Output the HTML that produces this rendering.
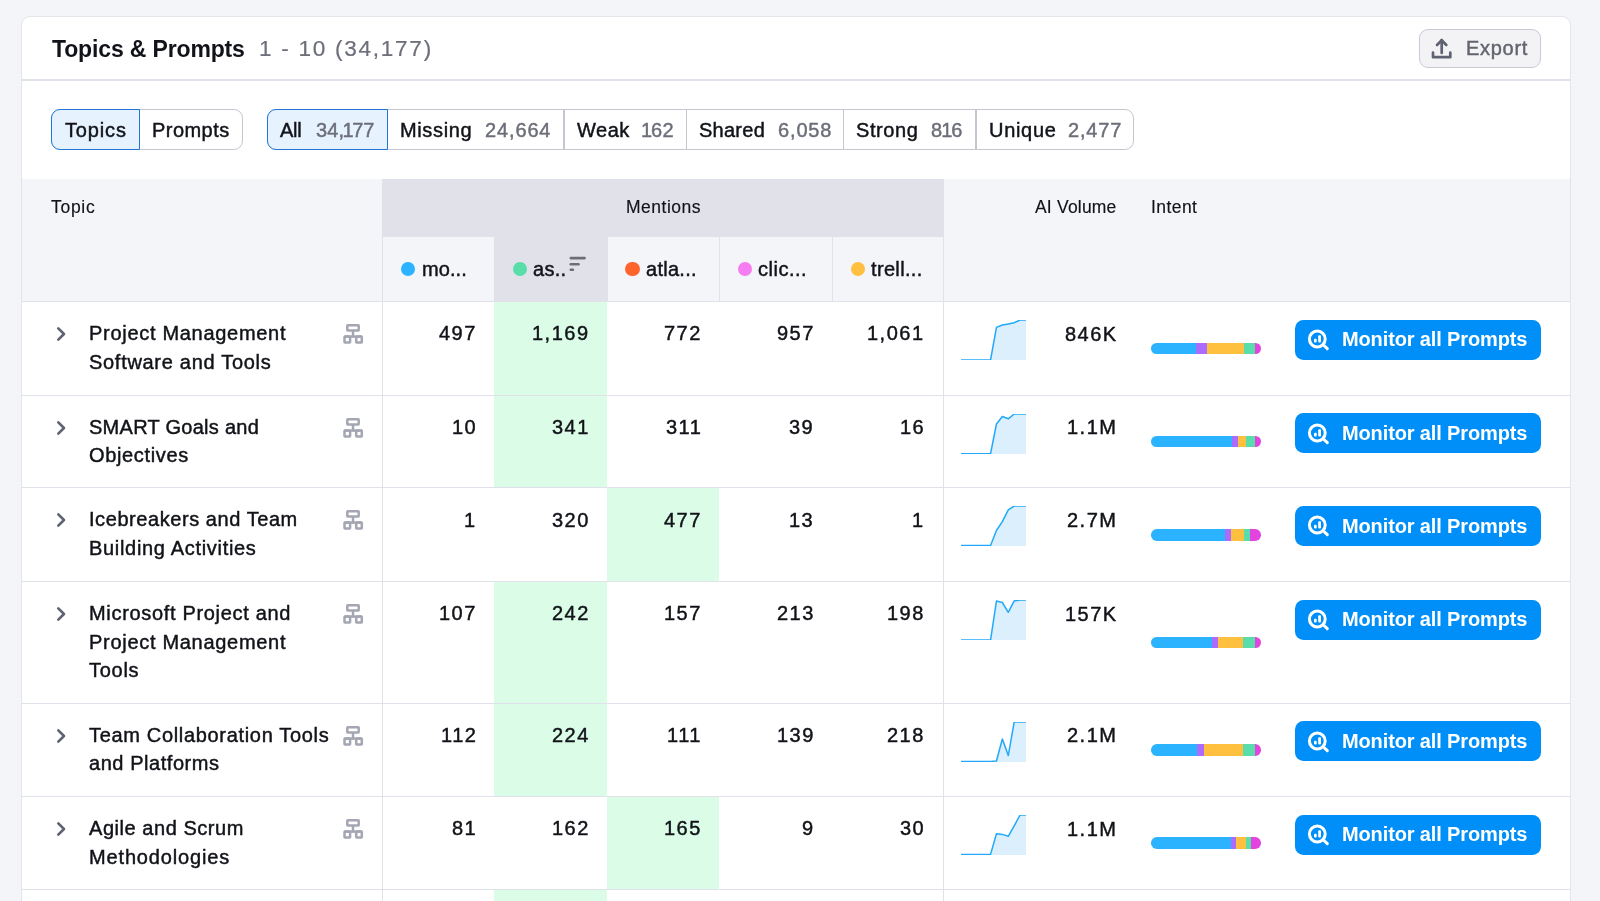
<!DOCTYPE html>
<html><head><meta charset="utf-8"><style>
html,body{margin:0;padding:0;}
body{width:1600px;height:901px;overflow:hidden;background:#f4f5f9;position:relative;font-family:"Liberation Sans", sans-serif;}
.t{position:absolute;line-height:1;white-space:nowrap;will-change:transform;-webkit-text-stroke:0.45px currentColor;}
.r{position:absolute;}
</style></head><body>
<div class="r" style="left:21.40px;top:15.80px;width:1549.40px;height:984.20px;background:#fff;border:1.2px solid #e4e5eb;border-radius:9px;box-sizing:border-box;"></div><div class="t" style="left:51.70px;top:37.53px;font-size:23px;color:#111318;font-weight:700;letter-spacing:-0.147px;-webkit-text-stroke:0;">Topics &amp; Prompts</div><div class="t" style="left:258.90px;top:38.17px;font-size:22.6px;color:#6c6e79;font-weight:400;letter-spacing:1.711px;-webkit-text-stroke:0.2px currentColor;">1 - 10 (34,177)</div><div class="r" style="left:1419.20px;top:29.20px;width:121.60px;height:39.20px;background:#f3f3f5;border:1.4px solid #c9cbd3;border-radius:9px;box-sizing:border-box;"></div><svg class="r" style="left:1427px;top:34px" width="30" height="30" viewBox="0 0 30 30"><g fill="none" stroke="#5f6270" stroke-width="2.7" stroke-linecap="round" stroke-linejoin="round"><path d="M14.7 6.2V19"/><path d="M10 11L14.7 6.2L19.3 11"/><path d="M6 18.7V23.2H23.3V18.7"/></g></svg><div class="t" style="left:1466.40px;top:38.27px;font-size:20px;color:#62646f;font-weight:400;letter-spacing:0.700px;">Export</div><div class="r" style="left:22.40px;top:79.30px;width:1547.40px;height:1.40px;background:#e0e1e9;"></div><div class="r" style="left:51.20px;top:109.10px;width:191.80px;height:41.00px;border:1.6px solid #c4c7cf;border-radius:9px;box-sizing:border-box;"></div><div class="r" style="left:51.20px;top:109.10px;width:89.00px;height:41.00px;background:#e6f2fe;border:1.6px solid #2176d9;border-radius:9px 0 0 9px;box-sizing:border-box;"></div><div class="t" style="left:64.90px;top:119.77px;font-size:20px;color:#111318;font-weight:400;letter-spacing:0.840px;">Topics</div><div class="t" style="left:152.40px;top:119.77px;font-size:20px;color:#111318;font-weight:400;letter-spacing:0.458px;">Prompts</div><div class="r" style="left:266.60px;top:109.10px;width:867.40px;height:41.00px;border:1.6px solid #c4c7cf;border-radius:9px;box-sizing:border-box;"></div><div class="r" style="left:266.60px;top:109.10px;width:121.40px;height:41.00px;background:#e6f2fe;border:1.6px solid #2176d9;border-radius:9px 0 0 9px;box-sizing:border-box;"></div><div class="r" style="left:563.15px;top:109.10px;width:1.50px;height:41.00px;background:#c4c7cf;"></div><div class="r" style="left:685.55px;top:109.10px;width:1.50px;height:41.00px;background:#c4c7cf;"></div><div class="r" style="left:842.85px;top:109.10px;width:1.50px;height:41.00px;background:#c4c7cf;"></div><div class="r" style="left:975.45px;top:109.10px;width:1.50px;height:41.00px;background:#c4c7cf;"></div><div class="t" style="left:280.00px;top:119.67px;font-size:20px;color:#111318;font-weight:400;letter-spacing:-0.325px;">All</div><div class="t" style="left:315.60px;top:119.67px;font-size:20px;color:#6c6e79;"><span style="letter-spacing:0.05px">3</span><span style="letter-spacing:0.05px">4</span><span style="letter-spacing:-1.45px">,</span><span style="letter-spacing:-1.45px">1</span><span style="letter-spacing:0.05px">7</span><span style="letter-spacing:0.05px">7</span></div><div class="t" style="left:400.00px;top:119.67px;font-size:20px;color:#111318;font-weight:400;letter-spacing:0.633px;">Missing</div><div class="t" style="left:485.00px;top:119.67px;font-size:20px;color:#6c6e79;"><span style="letter-spacing:0.85px">2</span><span style="letter-spacing:0.85px">4</span><span style="letter-spacing:0.85px">,</span><span style="letter-spacing:0.85px">6</span><span style="letter-spacing:0.85px">6</span><span style="letter-spacing:0.85px">4</span></div><div class="t" style="left:576.80px;top:119.67px;font-size:20px;color:#111318;font-weight:400;letter-spacing:0.500px;">Weak</div><div class="t" style="left:641.40px;top:119.67px;font-size:20px;color:#6c6e79;"><span style="letter-spacing:-1.18px">1</span><span style="letter-spacing:0.32px">6</span><span style="letter-spacing:0.32px">2</span></div><div class="t" style="left:699.30px;top:119.67px;font-size:20px;color:#111318;font-weight:400;letter-spacing:0.260px;">Shared</div><div class="t" style="left:777.60px;top:119.67px;font-size:20px;color:#6c6e79;"><span style="letter-spacing:0.84px">6</span><span style="letter-spacing:0.84px">,</span><span style="letter-spacing:0.84px">0</span><span style="letter-spacing:0.84px">5</span><span style="letter-spacing:0.84px">8</span></div><div class="t" style="left:856.20px;top:119.67px;font-size:20px;color:#111318;font-weight:400;letter-spacing:0.570px;">Strong</div><div class="t" style="left:931.20px;top:119.67px;font-size:20px;color:#6c6e79;"><span style="letter-spacing:-0.98px">8</span><span style="letter-spacing:-0.98px">1</span><span style="letter-spacing:0.52px">6</span></div><div class="t" style="left:988.50px;top:119.67px;font-size:20px;color:#111318;font-weight:400;letter-spacing:0.700px;">Unique</div><div class="t" style="left:1067.90px;top:119.67px;font-size:20px;color:#6c6e79;"><span style="letter-spacing:0.81px">2</span><span style="letter-spacing:0.81px">,</span><span style="letter-spacing:0.81px">4</span><span style="letter-spacing:0.81px">7</span><span style="letter-spacing:0.81px">7</span></div><div class="r" style="left:22.40px;top:178.80px;width:1547.40px;height:122.70px;background:#f4f5f9;"></div><div class="r" style="left:382.20px;top:178.80px;width:561.40px;height:58.60px;background:#e0e1e9;"></div><div class="r" style="left:494.20px;top:237.40px;width:113.60px;height:64.10px;background:#e0e1e9;"></div><div class="t" style="left:51.40px;top:198.89px;font-size:17.5px;color:#111318;font-weight:400;letter-spacing:0.713px;-webkit-text-stroke:0.15px currentColor;">Topic</div><div class="t" style="left:625.50px;top:199.09px;font-size:17.5px;color:#111318;font-weight:400;letter-spacing:0.500px;-webkit-text-stroke:0.15px currentColor;">Mentions</div><div class="t" style="left:1034.70px;top:198.99px;font-size:17.5px;color:#111318;font-weight:400;letter-spacing:0.194px;-webkit-text-stroke:0.15px currentColor;">AI Volume</div><div class="t" style="left:1151.20px;top:198.99px;font-size:17.5px;color:#111318;font-weight:400;letter-spacing:0.440px;-webkit-text-stroke:0.15px currentColor;">Intent</div><div class="r" style="left:400.70px;top:261.8px;width:14.4px;height:14.4px;border-radius:50%;background:#2bb3ff"></div><div class="t" style="left:421.80px;top:258.97px;font-size:20px;color:#111318;font-weight:400;letter-spacing:0.062px;">mo...</div><div class="r" style="left:512.80px;top:261.8px;width:14.4px;height:14.4px;border-radius:50%;background:#59dda9"></div><div class="t" style="left:533.30px;top:258.97px;font-size:20px;color:#111318;font-weight:400;letter-spacing:0.300px;">as..</div><div class="r" style="left:625.20px;top:261.8px;width:14.4px;height:14.4px;border-radius:50%;background:#ff642d"></div><div class="t" style="left:645.80px;top:258.97px;font-size:20px;color:#111318;font-weight:400;letter-spacing:0.267px;">atla...</div><div class="r" style="left:737.60px;top:261.8px;width:14.4px;height:14.4px;border-radius:50%;background:#f67cf2"></div><div class="t" style="left:758.30px;top:258.97px;font-size:20px;color:#111318;font-weight:400;letter-spacing:0.508px;">clic...</div><div class="r" style="left:850.50px;top:261.8px;width:14.4px;height:14.4px;border-radius:50%;background:#ffbf3f"></div><div class="t" style="left:870.70px;top:258.97px;font-size:20px;color:#111318;font-weight:400;letter-spacing:0.343px;">trell...</div><svg class="r" style="left:566px;top:254px" width="24" height="20" viewBox="0 0 24 20"><g stroke="#6c6e79" stroke-width="2.6" stroke-linecap="round"><path d="M4.8 4.1H18.6"/><path d="M4.8 10.2H12.5"/><path d="M4.8 15.8H6.9"/></g></svg><div class="r" style="left:494.20px;top:237.40px;width:1.20px;height:64.10px;background:#e0e1e9;"></div><div class="r" style="left:606.60px;top:237.40px;width:1.20px;height:64.10px;background:#e0e1e9;"></div><div class="r" style="left:719.00px;top:237.40px;width:1.20px;height:64.10px;background:#e0e1e9;"></div><div class="r" style="left:831.60px;top:237.40px;width:1.20px;height:64.10px;background:#e0e1e9;"></div><div class="r" style="left:381.90px;top:178.80px;width:1.30px;height:821.20px;background:#e0e1e9;"></div><div class="r" style="left:942.90px;top:237.40px;width:1.30px;height:762.60px;background:#e0e1e9;"></div><div class="r" style="left:494.20px;top:889.50px;width:112.40px;height:110.50px;background:#dbfde8;"></div><div class="r" style="left:494.20px;top:301.50px;width:112.40px;height:93.70px;background:#dbfde8;"></div><svg class="r" style="left:50px;top:323.80px" width="20" height="20" viewBox="0 0 20 20"><path d="M8.3 4.3L14 10L8.3 15.7" fill="none" stroke="#5f6270" stroke-width="2.6" stroke-linecap="round" stroke-linejoin="round"/></svg><div class="t" style="left:88.90px;top:322.97px;font-size:20px;color:#111318;font-weight:400;letter-spacing:0.703px;">Project Management</div><div class="t" style="left:88.90px;top:351.57px;font-size:20px;color:#111318;font-weight:400;letter-spacing:0.703px;">Software and Tools</div><svg class="r" style="left:343px;top:324.00px" width="21" height="21" viewBox="0 0 21 21"><g fill="none" stroke="#a4a6b3" stroke-width="2.5" stroke-linejoin="round"><rect x="4.3" y="1.3" width="11.4" height="5.3" rx="0.5"/><rect x="1.5" y="12.6" width="5.6" height="6" rx="0.5"/><rect x="13.2" y="12.6" width="5.6" height="6" rx="0.5"/><path d="M10 6.6V12.6"/><path d="M1.5 12.6H18.8"/></g></svg><div class="t" style="left:439.15px;top:323.27px;font-size:20px;color:#111318;font-weight:400;letter-spacing:1.500px;">497</div><div class="t" style="left:532.35px;top:323.27px;font-size:20px;color:#111318;font-weight:400;letter-spacing:1.500px;">1,169</div><div class="t" style="left:664.25px;top:323.27px;font-size:20px;color:#111318;font-weight:400;letter-spacing:1.500px;">772</div><div class="t" style="left:776.55px;top:323.27px;font-size:20px;color:#111318;font-weight:400;letter-spacing:1.500px;">957</div><div class="t" style="left:867.35px;top:323.27px;font-size:20px;color:#111318;font-weight:400;letter-spacing:1.500px;">1,061</div><svg class="r" style="left:961px;top:320.00px;overflow:hidden" width="65" height="40" viewBox="0 0 65 40"><path d="M0.00 40.00 L5.91 40.00 L11.82 40.00 L17.73 40.00 L23.64 40.00 L29.55 40.00 L35.45 7.40 L41.36 5.00 L47.27 3.90 L53.18 2.80 L59.09 0.00 L65.00 0.00 L65 40 L0 40 Z" fill="#dbeffd"/><path d="M0.00 40.00 L5.91 40.00 L11.82 40.00 L17.73 40.00 L23.64 40.00 L29.55 40.00 L35.45 7.40 L41.36 5.00 L47.27 3.90 L53.18 2.80 L59.09 0.00 L65.00 0.00" fill="none" stroke="#22a9fb" stroke-width="1.5" stroke-linejoin="round"/></svg><div class="t" style="left:1064.80px;top:323.57px;font-size:20px;color:#111318;font-weight:400;letter-spacing:1.500px;">846K</div><div class="r" style="left:1151px;top:342.75px;width:109.5px;height:11.6px;border-radius:5.8px;overflow:hidden;display:flex"><div style="width:44.80px;flex:none;height:100%;background:#2bb3ff"></div><div style="width:11.00px;flex:none;height:100%;background:#ab6cfe"></div><div style="width:37.00px;flex:none;height:100%;background:#ffbf3f"></div><div style="width:10.80px;flex:none;height:100%;background:#59ddaa"></div><div style="flex:1;height:100%;background:#e344e0"></div></div><div class="r" style="left:1295.10px;top:319.60px;width:245.90px;height:40.20px;background:#008ff8;border-radius:8.5px;"></div><svg class="r" style="left:1303px;top:324.80px" width="30" height="30" viewBox="0 0 30 30"><g fill="none" stroke="#fff" stroke-width="3" stroke-linecap="round"><circle cx="14.3" cy="14" r="7.9"/><path d="M21 20.5L24.3 23.7"/></g><rect x="11" y="13.7" width="2.7" height="3.8" rx="1" fill="#fff"/><rect x="15.2" y="10.2" width="2.8" height="7.3" rx="1" fill="#fff"/></svg><div class="t" style="left:1342.00px;top:329.37px;font-size:20px;color:#fff;font-weight:700;letter-spacing:-0.128px;-webkit-text-stroke:0;">Monitor all Prompts</div><div class="r" style="left:494.20px;top:395.20px;width:112.40px;height:92.55px;background:#dbfde8;"></div><svg class="r" style="left:50px;top:417.50px" width="20" height="20" viewBox="0 0 20 20"><path d="M8.3 4.3L14 10L8.3 15.7" fill="none" stroke="#5f6270" stroke-width="2.6" stroke-linecap="round" stroke-linejoin="round"/></svg><div class="t" style="left:88.90px;top:416.67px;font-size:20px;color:#111318;font-weight:400;letter-spacing:0.271px;">SMART Goals and</div><div class="t" style="left:88.90px;top:445.27px;font-size:20px;color:#111318;font-weight:400;letter-spacing:0.650px;">Objectives</div><svg class="r" style="left:343px;top:417.70px" width="21" height="21" viewBox="0 0 21 21"><g fill="none" stroke="#a4a6b3" stroke-width="2.5" stroke-linejoin="round"><rect x="4.3" y="1.3" width="11.4" height="5.3" rx="0.5"/><rect x="1.5" y="12.6" width="5.6" height="6" rx="0.5"/><rect x="13.2" y="12.6" width="5.6" height="6" rx="0.5"/><path d="M10 6.6V12.6"/><path d="M1.5 12.6H18.8"/></g></svg><div class="t" style="left:451.75px;top:416.97px;font-size:20px;color:#111318;font-weight:400;letter-spacing:1.500px;">10</div><div class="t" style="left:552.05px;top:416.97px;font-size:20px;color:#111318;font-weight:400;letter-spacing:1.500px;">341</div><div class="t" style="left:665.70px;top:416.97px;font-size:20px;color:#111318;font-weight:400;letter-spacing:1.500px;">311</div><div class="t" style="left:789.15px;top:416.97px;font-size:20px;color:#111318;font-weight:400;letter-spacing:1.500px;">39</div><div class="t" style="left:899.65px;top:416.97px;font-size:20px;color:#111318;font-weight:400;letter-spacing:1.500px;">16</div><svg class="r" style="left:961px;top:413.70px;overflow:hidden" width="65" height="40" viewBox="0 0 65 40"><path d="M0.00 39.70 L5.91 39.70 L11.82 39.70 L17.73 39.70 L23.64 39.70 L29.55 39.70 L35.45 10.00 L41.36 2.50 L47.27 4.80 L53.18 0.00 L59.09 0.00 L65.00 0.00 L65 40 L0 40 Z" fill="#dbeffd"/><path d="M0.00 39.70 L5.91 39.70 L11.82 39.70 L17.73 39.70 L23.64 39.70 L29.55 39.70 L35.45 10.00 L41.36 2.50 L47.27 4.80 L53.18 0.00 L59.09 0.00 L65.00 0.00" fill="none" stroke="#22a9fb" stroke-width="1.5" stroke-linejoin="round"/></svg><div class="t" style="left:1067.05px;top:417.27px;font-size:20px;color:#111318;font-weight:400;letter-spacing:1.500px;">1.1M</div><div class="r" style="left:1151px;top:435.88px;width:109.5px;height:11.6px;border-radius:5.8px;overflow:hidden;display:flex"><div style="width:81.10px;flex:none;height:100%;background:#2bb3ff"></div><div style="width:5.70px;flex:none;height:100%;background:#ab6cfe"></div><div style="width:7.90px;flex:none;height:100%;background:#ffbf3f"></div><div style="width:9.00px;flex:none;height:100%;background:#59ddaa"></div><div style="flex:1;height:100%;background:#e344e0"></div></div><div class="r" style="left:1295.10px;top:413.30px;width:245.90px;height:40.20px;background:#008ff8;border-radius:8.5px;"></div><svg class="r" style="left:1303px;top:418.50px" width="30" height="30" viewBox="0 0 30 30"><g fill="none" stroke="#fff" stroke-width="3" stroke-linecap="round"><circle cx="14.3" cy="14" r="7.9"/><path d="M21 20.5L24.3 23.7"/></g><rect x="11" y="13.7" width="2.7" height="3.8" rx="1" fill="#fff"/><rect x="15.2" y="10.2" width="2.8" height="7.3" rx="1" fill="#fff"/></svg><div class="t" style="left:1342.00px;top:423.07px;font-size:20px;color:#fff;font-weight:700;letter-spacing:-0.128px;-webkit-text-stroke:0;">Monitor all Prompts</div><div class="r" style="left:606.60px;top:487.75px;width:112.40px;height:93.75px;background:#dbfde8;"></div><svg class="r" style="left:50px;top:510.05px" width="20" height="20" viewBox="0 0 20 20"><path d="M8.3 4.3L14 10L8.3 15.7" fill="none" stroke="#5f6270" stroke-width="2.6" stroke-linecap="round" stroke-linejoin="round"/></svg><div class="t" style="left:88.90px;top:509.22px;font-size:20px;color:#111318;font-weight:400;letter-spacing:0.566px;">Icebreakers and Team</div><div class="t" style="left:88.90px;top:537.82px;font-size:20px;color:#111318;font-weight:400;letter-spacing:0.686px;">Building Activities</div><svg class="r" style="left:343px;top:510.25px" width="21" height="21" viewBox="0 0 21 21"><g fill="none" stroke="#a4a6b3" stroke-width="2.5" stroke-linejoin="round"><rect x="4.3" y="1.3" width="11.4" height="5.3" rx="0.5"/><rect x="1.5" y="12.6" width="5.6" height="6" rx="0.5"/><rect x="13.2" y="12.6" width="5.6" height="6" rx="0.5"/><path d="M10 6.6V12.6"/><path d="M1.5 12.6H18.8"/></g></svg><div class="t" style="left:464.40px;top:509.52px;font-size:20px;color:#111318;font-weight:400;letter-spacing:1.500px;">1</div><div class="t" style="left:552.05px;top:509.52px;font-size:20px;color:#111318;font-weight:400;letter-spacing:1.500px;">320</div><div class="t" style="left:664.25px;top:509.52px;font-size:20px;color:#111318;font-weight:400;letter-spacing:1.500px;">477</div><div class="t" style="left:789.15px;top:509.52px;font-size:20px;color:#111318;font-weight:400;letter-spacing:1.500px;">13</div><div class="t" style="left:912.30px;top:509.52px;font-size:20px;color:#111318;font-weight:400;letter-spacing:1.500px;">1</div><svg class="r" style="left:961px;top:506.25px;overflow:hidden" width="65" height="40" viewBox="0 0 65 40"><path d="M0.00 39.60 L5.91 39.60 L11.82 39.60 L17.73 39.60 L23.64 39.60 L29.55 39.60 L35.45 24.50 L41.36 15.70 L47.27 3.80 L53.18 0.00 L59.09 0.00 L65.00 0.00 L65 40 L0 40 Z" fill="#dbeffd"/><path d="M0.00 39.60 L5.91 39.60 L11.82 39.60 L17.73 39.60 L23.64 39.60 L29.55 39.60 L35.45 24.50 L41.36 15.70 L47.27 3.80 L53.18 0.00 L59.09 0.00 L65.00 0.00" fill="none" stroke="#22a9fb" stroke-width="1.5" stroke-linejoin="round"/></svg><div class="t" style="left:1067.05px;top:509.82px;font-size:20px;color:#111318;font-weight:400;letter-spacing:1.500px;">2.7M</div><div class="r" style="left:1151px;top:529.02px;width:109.5px;height:11.6px;border-radius:5.8px;overflow:hidden;display:flex"><div style="width:73.80px;flex:none;height:100%;background:#2bb3ff"></div><div style="width:5.80px;flex:none;height:100%;background:#ab6cfe"></div><div style="width:13.00px;flex:none;height:100%;background:#ffbf3f"></div><div style="width:6.10px;flex:none;height:100%;background:#59ddaa"></div><div style="flex:1;height:100%;background:#e344e0"></div></div><div class="r" style="left:1295.10px;top:505.85px;width:245.90px;height:40.20px;background:#008ff8;border-radius:8.5px;"></div><svg class="r" style="left:1303px;top:511.05px" width="30" height="30" viewBox="0 0 30 30"><g fill="none" stroke="#fff" stroke-width="3" stroke-linecap="round"><circle cx="14.3" cy="14" r="7.9"/><path d="M21 20.5L24.3 23.7"/></g><rect x="11" y="13.7" width="2.7" height="3.8" rx="1" fill="#fff"/><rect x="15.2" y="10.2" width="2.8" height="7.3" rx="1" fill="#fff"/></svg><div class="t" style="left:1342.00px;top:515.62px;font-size:20px;color:#fff;font-weight:700;letter-spacing:-0.128px;-webkit-text-stroke:0;">Monitor all Prompts</div><div class="r" style="left:494.20px;top:581.50px;width:112.40px;height:121.70px;background:#dbfde8;"></div><svg class="r" style="left:50px;top:603.80px" width="20" height="20" viewBox="0 0 20 20"><path d="M8.3 4.3L14 10L8.3 15.7" fill="none" stroke="#5f6270" stroke-width="2.6" stroke-linecap="round" stroke-linejoin="round"/></svg><div class="t" style="left:88.90px;top:602.97px;font-size:20px;color:#111318;font-weight:400;letter-spacing:0.678px;">Microsoft Project and</div><div class="t" style="left:88.90px;top:631.57px;font-size:20px;color:#111318;font-weight:400;letter-spacing:0.703px;">Project Management</div><div class="t" style="left:88.90px;top:660.17px;font-size:20px;color:#111318;font-weight:400;letter-spacing:0.725px;">Tools</div><svg class="r" style="left:343px;top:604.00px" width="21" height="21" viewBox="0 0 21 21"><g fill="none" stroke="#a4a6b3" stroke-width="2.5" stroke-linejoin="round"><rect x="4.3" y="1.3" width="11.4" height="5.3" rx="0.5"/><rect x="1.5" y="12.6" width="5.6" height="6" rx="0.5"/><rect x="13.2" y="12.6" width="5.6" height="6" rx="0.5"/><path d="M10 6.6V12.6"/><path d="M1.5 12.6H18.8"/></g></svg><div class="t" style="left:439.15px;top:603.27px;font-size:20px;color:#111318;font-weight:400;letter-spacing:1.500px;">107</div><div class="t" style="left:552.05px;top:603.27px;font-size:20px;color:#111318;font-weight:400;letter-spacing:1.500px;">242</div><div class="t" style="left:664.25px;top:603.27px;font-size:20px;color:#111318;font-weight:400;letter-spacing:1.500px;">157</div><div class="t" style="left:776.55px;top:603.27px;font-size:20px;color:#111318;font-weight:400;letter-spacing:1.500px;">213</div><div class="t" style="left:887.05px;top:603.27px;font-size:20px;color:#111318;font-weight:400;letter-spacing:1.500px;">198</div><svg class="r" style="left:961px;top:600.00px;overflow:hidden" width="65" height="40" viewBox="0 0 65 40"><path d="M0.00 40.00 L5.91 40.00 L11.82 40.00 L17.73 40.00 L23.64 40.00 L29.55 40.00 L35.45 1.10 L41.36 2.50 L47.27 12.30 L53.18 0.90 L59.09 0.00 L65.00 0.00 L65 40 L0 40 Z" fill="#dbeffd"/><path d="M0.00 40.00 L5.91 40.00 L11.82 40.00 L17.73 40.00 L23.64 40.00 L29.55 40.00 L35.45 1.10 L41.36 2.50 L47.27 12.30 L53.18 0.90 L59.09 0.00 L65.00 0.00" fill="none" stroke="#22a9fb" stroke-width="1.5" stroke-linejoin="round"/></svg><div class="t" style="left:1064.80px;top:603.57px;font-size:20px;color:#111318;font-weight:400;letter-spacing:1.500px;">157K</div><div class="r" style="left:1151px;top:636.75px;width:109.5px;height:11.6px;border-radius:5.8px;overflow:hidden;display:flex"><div style="width:61.10px;flex:none;height:100%;background:#2bb3ff"></div><div style="width:6.40px;flex:none;height:100%;background:#ab6cfe"></div><div style="width:24.50px;flex:none;height:100%;background:#ffbf3f"></div><div style="width:11.70px;flex:none;height:100%;background:#59ddaa"></div><div style="flex:1;height:100%;background:#e344e0"></div></div><div class="r" style="left:1295.10px;top:599.60px;width:245.90px;height:40.20px;background:#008ff8;border-radius:8.5px;"></div><svg class="r" style="left:1303px;top:604.80px" width="30" height="30" viewBox="0 0 30 30"><g fill="none" stroke="#fff" stroke-width="3" stroke-linecap="round"><circle cx="14.3" cy="14" r="7.9"/><path d="M21 20.5L24.3 23.7"/></g><rect x="11" y="13.7" width="2.7" height="3.8" rx="1" fill="#fff"/><rect x="15.2" y="10.2" width="2.8" height="7.3" rx="1" fill="#fff"/></svg><div class="t" style="left:1342.00px;top:609.37px;font-size:20px;color:#fff;font-weight:700;letter-spacing:-0.128px;-webkit-text-stroke:0;">Monitor all Prompts</div><div class="r" style="left:494.20px;top:703.20px;width:112.40px;height:93.40px;background:#dbfde8;"></div><svg class="r" style="left:50px;top:725.50px" width="20" height="20" viewBox="0 0 20 20"><path d="M8.3 4.3L14 10L8.3 15.7" fill="none" stroke="#5f6270" stroke-width="2.6" stroke-linecap="round" stroke-linejoin="round"/></svg><div class="t" style="left:88.90px;top:724.67px;font-size:20px;color:#111318;font-weight:400;letter-spacing:0.674px;">Team Collaboration Tools</div><div class="t" style="left:88.90px;top:753.27px;font-size:20px;color:#111318;font-weight:400;letter-spacing:0.550px;">and Platforms</div><svg class="r" style="left:343px;top:725.70px" width="21" height="21" viewBox="0 0 21 21"><g fill="none" stroke="#a4a6b3" stroke-width="2.5" stroke-linejoin="round"><rect x="4.3" y="1.3" width="11.4" height="5.3" rx="0.5"/><rect x="1.5" y="12.6" width="5.6" height="6" rx="0.5"/><rect x="13.2" y="12.6" width="5.6" height="6" rx="0.5"/><path d="M10 6.6V12.6"/><path d="M1.5 12.6H18.8"/></g></svg><div class="t" style="left:440.60px;top:724.97px;font-size:20px;color:#111318;font-weight:400;letter-spacing:1.500px;">112</div><div class="t" style="left:552.05px;top:724.97px;font-size:20px;color:#111318;font-weight:400;letter-spacing:1.500px;">224</div><div class="t" style="left:667.20px;top:724.97px;font-size:20px;color:#111318;font-weight:400;letter-spacing:1.500px;">111</div><div class="t" style="left:776.55px;top:724.97px;font-size:20px;color:#111318;font-weight:400;letter-spacing:1.500px;">139</div><div class="t" style="left:887.05px;top:724.97px;font-size:20px;color:#111318;font-weight:400;letter-spacing:1.500px;">218</div><svg class="r" style="left:961px;top:721.70px;overflow:hidden" width="65" height="40" viewBox="0 0 65 40"><path d="M0.00 39.40 L5.91 39.40 L11.82 39.40 L17.73 39.40 L23.64 39.40 L29.55 39.40 L35.45 39.00 L41.36 17.00 L47.27 33.60 L53.18 0.00 L59.09 0.00 L65.00 0.00 L65 40 L0 40 Z" fill="#dbeffd"/><path d="M0.00 39.40 L5.91 39.40 L11.82 39.40 L17.73 39.40 L23.64 39.40 L29.55 39.40 L35.45 39.00 L41.36 17.00 L47.27 33.60 L53.18 0.00 L59.09 0.00 L65.00 0.00" fill="none" stroke="#22a9fb" stroke-width="1.5" stroke-linejoin="round"/></svg><div class="t" style="left:1067.05px;top:725.27px;font-size:20px;color:#111318;font-weight:400;letter-spacing:1.500px;">2.1M</div><div class="r" style="left:1151px;top:744.30px;width:109.5px;height:11.6px;border-radius:5.8px;overflow:hidden;display:flex"><div style="width:45.90px;flex:none;height:100%;background:#2bb3ff"></div><div style="width:7.20px;flex:none;height:100%;background:#ab6cfe"></div><div style="width:39.40px;flex:none;height:100%;background:#ffbf3f"></div><div style="width:11.20px;flex:none;height:100%;background:#59ddaa"></div><div style="flex:1;height:100%;background:#e344e0"></div></div><div class="r" style="left:1295.10px;top:721.30px;width:245.90px;height:40.20px;background:#008ff8;border-radius:8.5px;"></div><svg class="r" style="left:1303px;top:726.50px" width="30" height="30" viewBox="0 0 30 30"><g fill="none" stroke="#fff" stroke-width="3" stroke-linecap="round"><circle cx="14.3" cy="14" r="7.9"/><path d="M21 20.5L24.3 23.7"/></g><rect x="11" y="13.7" width="2.7" height="3.8" rx="1" fill="#fff"/><rect x="15.2" y="10.2" width="2.8" height="7.3" rx="1" fill="#fff"/></svg><div class="t" style="left:1342.00px;top:731.07px;font-size:20px;color:#fff;font-weight:700;letter-spacing:-0.128px;-webkit-text-stroke:0;">Monitor all Prompts</div><div class="r" style="left:606.60px;top:796.60px;width:112.40px;height:92.90px;background:#dbfde8;"></div><svg class="r" style="left:50px;top:818.90px" width="20" height="20" viewBox="0 0 20 20"><path d="M8.3 4.3L14 10L8.3 15.7" fill="none" stroke="#5f6270" stroke-width="2.6" stroke-linecap="round" stroke-linejoin="round"/></svg><div class="t" style="left:88.90px;top:818.07px;font-size:20px;color:#111318;font-weight:400;letter-spacing:0.546px;">Agile and Scrum</div><div class="t" style="left:88.90px;top:846.67px;font-size:20px;color:#111318;font-weight:400;letter-spacing:0.850px;">Methodologies</div><svg class="r" style="left:343px;top:819.10px" width="21" height="21" viewBox="0 0 21 21"><g fill="none" stroke="#a4a6b3" stroke-width="2.5" stroke-linejoin="round"><rect x="4.3" y="1.3" width="11.4" height="5.3" rx="0.5"/><rect x="1.5" y="12.6" width="5.6" height="6" rx="0.5"/><rect x="13.2" y="12.6" width="5.6" height="6" rx="0.5"/><path d="M10 6.6V12.6"/><path d="M1.5 12.6H18.8"/></g></svg><div class="t" style="left:451.75px;top:818.37px;font-size:20px;color:#111318;font-weight:400;letter-spacing:1.500px;">81</div><div class="t" style="left:552.05px;top:818.37px;font-size:20px;color:#111318;font-weight:400;letter-spacing:1.500px;">162</div><div class="t" style="left:664.25px;top:818.37px;font-size:20px;color:#111318;font-weight:400;letter-spacing:1.500px;">165</div><div class="t" style="left:801.80px;top:818.37px;font-size:20px;color:#111318;font-weight:400;letter-spacing:1.500px;">9</div><div class="t" style="left:899.65px;top:818.37px;font-size:20px;color:#111318;font-weight:400;letter-spacing:1.500px;">30</div><svg class="r" style="left:961px;top:815.10px;overflow:hidden" width="65" height="40" viewBox="0 0 65 40"><path d="M0.00 39.40 L5.91 39.40 L11.82 39.40 L17.73 39.40 L23.64 39.40 L29.55 39.40 L35.45 18.80 L41.36 19.40 L47.27 21.30 L53.18 10.80 L59.09 0.00 L65.00 0.00 L65 40 L0 40 Z" fill="#dbeffd"/><path d="M0.00 39.40 L5.91 39.40 L11.82 39.40 L17.73 39.40 L23.64 39.40 L29.55 39.40 L35.45 18.80 L41.36 19.40 L47.27 21.30 L53.18 10.80 L59.09 0.00 L65.00 0.00" fill="none" stroke="#22a9fb" stroke-width="1.5" stroke-linejoin="round"/></svg><div class="t" style="left:1067.05px;top:818.67px;font-size:20px;color:#111318;font-weight:400;letter-spacing:1.500px;">1.1M</div><div class="r" style="left:1151px;top:837.45px;width:109.5px;height:11.6px;border-radius:5.8px;overflow:hidden;display:flex"><div style="width:80.00px;flex:none;height:100%;background:#2bb3ff"></div><div style="width:5.30px;flex:none;height:100%;background:#ab6cfe"></div><div style="width:9.40px;flex:none;height:100%;background:#ffbf3f"></div><div style="width:5.80px;flex:none;height:100%;background:#59ddaa"></div><div style="flex:1;height:100%;background:#e344e0"></div></div><div class="r" style="left:1295.10px;top:814.70px;width:245.90px;height:40.20px;background:#008ff8;border-radius:8.5px;"></div><svg class="r" style="left:1303px;top:819.90px" width="30" height="30" viewBox="0 0 30 30"><g fill="none" stroke="#fff" stroke-width="3" stroke-linecap="round"><circle cx="14.3" cy="14" r="7.9"/><path d="M21 20.5L24.3 23.7"/></g><rect x="11" y="13.7" width="2.7" height="3.8" rx="1" fill="#fff"/><rect x="15.2" y="10.2" width="2.8" height="7.3" rx="1" fill="#fff"/></svg><div class="t" style="left:1342.00px;top:824.47px;font-size:20px;color:#fff;font-weight:700;letter-spacing:-0.128px;-webkit-text-stroke:0;">Monitor all Prompts</div><div class="r" style="left:22.40px;top:300.80px;width:1547.40px;height:1.40px;background:#e0e1e9;"></div><div class="r" style="left:22.40px;top:394.50px;width:1547.40px;height:1.40px;background:#e0e1e9;"></div><div class="r" style="left:22.40px;top:487.05px;width:1547.40px;height:1.40px;background:#e0e1e9;"></div><div class="r" style="left:22.40px;top:580.80px;width:1547.40px;height:1.40px;background:#e0e1e9;"></div><div class="r" style="left:22.40px;top:702.50px;width:1547.40px;height:1.40px;background:#e0e1e9;"></div><div class="r" style="left:22.40px;top:795.90px;width:1547.40px;height:1.40px;background:#e0e1e9;"></div><div class="r" style="left:22.40px;top:888.80px;width:1547.40px;height:1.40px;background:#e0e1e9;"></div>
</body></html>
